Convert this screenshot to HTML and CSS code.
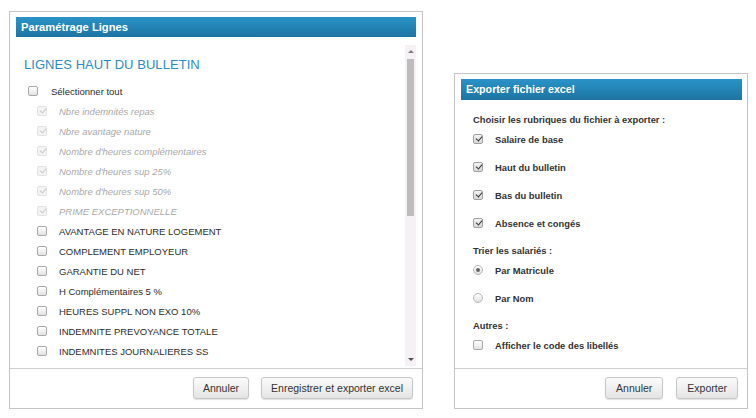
FILE: index.html
```html
<!DOCTYPE html>
<html lang="fr">
<head>
<meta charset="utf-8">
<title>Dialogues</title>
<link rel="stylesheet" href="styles.css">
</head>
<body>
<div class="page">
  <section class="dlg dlg-lines">
    <header class="dlg-title">Paramétrage Lignes</header>
    <div class="dlg-body">
      <div class="scroll-content">
        <h2 class="section-title">LIGNES HAUT DU BULLETIN</h2>
        <div class="row row-all"><span class="cb"></span><span class="lbl">Sélectionner tout</span></div>
        <ul class="list">
          <li class="row disabled"><span class="cb checked"></span><span class="lbl">Nbre indemnités repas</span></li>
          <li class="row disabled"><span class="cb checked"></span><span class="lbl">Nbre avantage nature</span></li>
          <li class="row disabled"><span class="cb checked"></span><span class="lbl">Nombre d'heures complémentaires</span></li>
          <li class="row disabled"><span class="cb checked"></span><span class="lbl">Nombre d'heures sup 25%</span></li>
          <li class="row disabled"><span class="cb checked"></span><span class="lbl">Nombre d'heures sup 50%</span></li>
          <li class="row disabled"><span class="cb checked"></span><span class="lbl">PRIME EXCEPTIONNELLE</span></li>
          <li class="row"><span class="cb"></span><span class="lbl">AVANTAGE EN NATURE LOGEMENT</span></li>
          <li class="row"><span class="cb"></span><span class="lbl">COMPLEMENT EMPLOYEUR</span></li>
          <li class="row"><span class="cb"></span><span class="lbl">GARANTIE DU NET</span></li>
          <li class="row"><span class="cb"></span><span class="lbl">H Complémentaires 5 %</span></li>
          <li class="row"><span class="cb"></span><span class="lbl">HEURES SUPPL NON EXO 10%</span></li>
          <li class="row"><span class="cb"></span><span class="lbl">INDEMNITE PREVOYANCE TOTALE</span></li>
          <li class="row"><span class="cb"></span><span class="lbl">INDEMNITES JOURNALIERES SS</span></li>
        </ul>
      </div>
      <div class="scrollbar">
        <span class="sb-btn"><span class="arrow-up"></span></span>
        <span class="sb-thumb"></span>
        <span class="sb-track"></span>
        <span class="sb-btn"><span class="arrow-down"></span></span>
      </div>
    </div>
    <footer class="dlg-footer">
      <button class="btn" type="button">Annuler</button>
      <button class="btn" type="button">Enregistrer et exporter excel</button>
    </footer>
  </section>

  <section class="dlg dlg-export">
    <header class="dlg-title">Exporter fichier excel</header>
    <div class="export-body">
      <div class="group-title first">Choisir les rubriques du fichier à exporter :</div>
      <div class="opt first"><span class="cb on"></span><span class="lbl">Salaire de base</span></div>
      <div class="opt"><span class="cb on"></span><span class="lbl">Haut du bulletin</span></div>
      <div class="opt"><span class="cb on"></span><span class="lbl">Bas du bulletin</span></div>
      <div class="opt"><span class="cb on"></span><span class="lbl">Absence et congés</span></div>
      <div class="group-title">Trier les salariés :</div>
      <div class="opt first"><span class="rd on"></span><span class="lbl">Par Matricule</span></div>
      <div class="opt"><span class="rd"></span><span class="lbl">Par Nom</span></div>
      <div class="group-title">Autres :</div>
      <div class="opt first"><span class="cb"></span><span class="lbl">Afficher le code des libellés</span></div>
    </div>
    <footer class="dlg-footer export-footer">
      <button class="btn" type="button">Annuler</button>
      <button class="btn" type="button">Exporter</button>
    </footer>
  </section>
</div>
</body>
</html>
```

FILE: styles.css
```css
* { box-sizing: border-box; }

html, body {
  margin: 0;
  padding: 0;
  background: #ffffff;
  font-family: "Liberation Sans", Arial, sans-serif;
  color: #333333;
}

.page {
  display: flex;
  align-items: flex-end;
  gap: 31px;
  padding: 11px 0 0 9px;
  height: 409px;
}

.dlg {
  display: flex;
  flex-direction: column;
  border: 1px solid #c4c4c4;
  background: #ffffff;
}

.dlg-lines {
  width: 414px;
  height: 398px;
}

.dlg-export {
  width: 294px;
  height: 336px;
}

.dlg-title {
  margin: 5px 6px 0 6px;
  height: 20px;
  line-height: 20px;
  padding-left: 5px;
  font-size: 11.2px;
  font-weight: bold;
  color: #ffffff;
  background: linear-gradient(#2a93c7, #1d74a2);
}

.dlg-export .dlg-title {
  margin: 5px 5px 0 6px;
  height: 21px;
  line-height: 21px;
  padding-left: 5px;
  font-size: 10.7px;
}

/* left dialog body */
.dlg-body {
  flex: 1;
  display: flex;
  padding: 8px 6px 2px 0;
  min-height: 0;
}

.scroll-content {
  flex: 1;
  overflow: hidden;
  padding-left: 14px;
}

.section-title {
  margin: 12px 0 0 0;
  font-size: 13px;
  line-height: 16px;
  font-weight: normal;
  color: #2a8cc2;
  letter-spacing: 0.05px;
}

.row {
  display: flex;
  align-items: center;
  height: 20px;
  font-size: 9.5px;
  color: #2b2b2b;
}

.row-all {
  margin-top: 8px;
  padding-left: 4px;
}

.row-all .cb { margin-right: 13px; }

.list {
  list-style: none;
  margin: 0;
  padding: 0 0 0 13px;
}

.list .cb { margin-right: 12px; }

.row.disabled .lbl {
  font-style: italic;
  color: #a8a8a8;
}

/* checkbox */
.cb {
  position: relative;
  flex: none;
  width: 10px;
  height: 10px;
  border: 1px solid #a8a8a8;
  border-radius: 2px;
  background: linear-gradient(#ffffff, #e2e2e2);
}

.cb.checked {
  border-color: #e2e2e2;
  background: #f4f4f4;
}

.cb.checked::after,
.cb.on::after {
  content: "";
  position: absolute;
  left: 2.5px;
  top: 0px;
  width: 3px;
  height: 5px;
  border-right: 1.6px solid #c9c9c9;
  border-bottom: 1.6px solid #c9c9c9;
  transform: rotate(40deg);
}

.cb.on {
  border-color: #a0a0a0;
  background: linear-gradient(#f4f4f4, #d8d8d8);
}

.cb.on::after {
  border-color: #333333;
}

/* radio */
.rd {
  position: relative;
  flex: none;
  width: 10px;
  height: 10px;
  border: 1px solid #b8b8b8;
  border-radius: 50%;
  background: linear-gradient(#ffffff, #e0e0e0);
}

.rd.on::after {
  content: "";
  position: absolute;
  left: 2px;
  top: 2px;
  width: 4px;
  height: 4px;
  border-radius: 50%;
  background: #666666;
}

/* scrollbar */
.scrollbar {
  flex: none;
  width: 11px;
  display: flex;
  flex-direction: column;
  background: #f5f1f5;
}

.sb-btn {
  flex: none;
  height: 13px;
  display: flex;
  align-items: center;
  justify-content: center;
  background: #f5f1f5;
}

.arrow-up {
  width: 0;
  height: 0;
  border-left: 3px solid transparent;
  border-right: 3px solid transparent;
  border-bottom: 3px solid #7f7f7f;
}

.arrow-down {
  width: 0;
  height: 0;
  border-left: 3px solid transparent;
  border-right: 3px solid transparent;
  border-top: 3px solid #505050;
}

.sb-thumb {
  flex: none;
  height: 157px;
  margin: 1px 2px 0 2px;
  background: #bdbdbd;
}

.sb-track { flex: 1; }

/* footer */
.dlg-footer {
  flex: none;
  display: flex;
  justify-content: flex-end;
  gap: 12px;
  border-top: 1px solid #cfcfcf;
  padding: 8px 9px 9px 0;
}

.export-footer { gap: 13px; }

.btn {
  height: 22px;
  padding: 0 9px;
  font-family: "Liberation Sans", Arial, sans-serif;
  font-size: 10.5px;
  color: #333333;
  border: 1px solid #c6c6c6;
  border-radius: 3px;
  background: linear-gradient(#fbfbfb, #e4e4e4);
  box-shadow: 0 1px 1px rgba(0, 0, 0, 0.12);
}

.export-footer .btn { padding: 0 10px; }

/* right dialog body */
.export-body {
  flex: 1;
  padding: 10px 0 0 18px;
}

.group-title {
  height: 18px;
  line-height: 18px;
  margin-top: 10px;
  font-size: 9.4px;
  font-weight: bold;
  color: #333333;
}

.group-title.first { margin-top: 1px; }

.opt {
  display: flex;
  align-items: center;
  height: 18px;
  margin-top: 10px;
  font-size: 9.4px;
  font-weight: bold;
  color: #333333;
}

.opt.first { margin-top: 1px; }

.opt .cb, .opt .rd { margin-right: 12px; }
```
